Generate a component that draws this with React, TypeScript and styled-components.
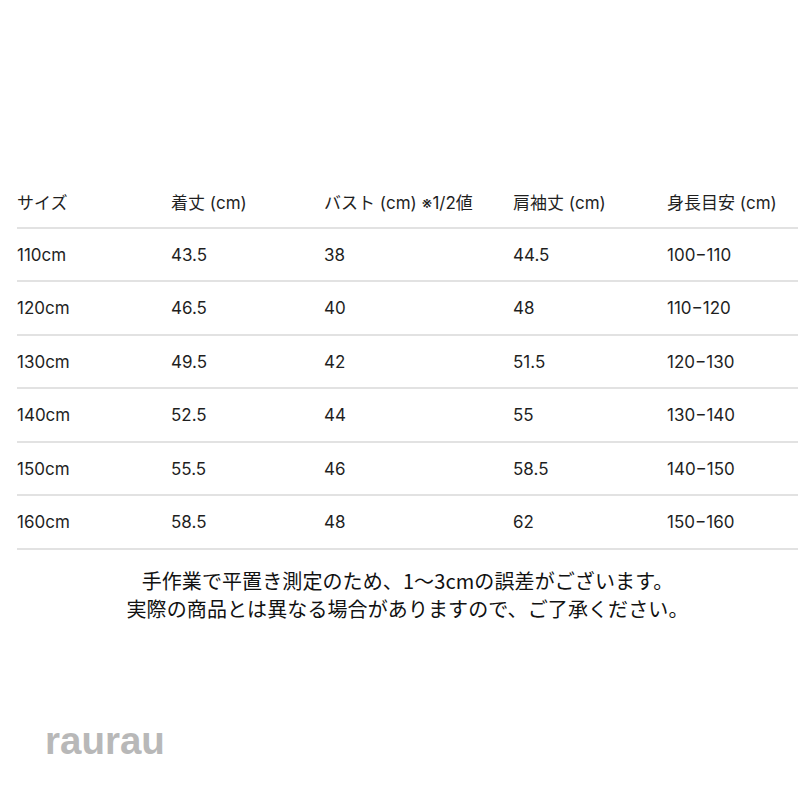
import React from "react";
import styled, { createGlobalStyle } from "styled-components";

const GlobalStyle = createGlobalStyle`
  body {
    margin: 0;
    background: #ffffff;
    font-family: Inter, Roboto, "Noto Sans CJK JP", sans-serif;
    color: #222222;
  }
`;

const Page = styled.div`
  width: 812px;
  height: 812px;
  padding: 175px 14px 0 17px;
  box-sizing: border-box;
  display: flex;
  flex-direction: column;
`;

const Table = styled.div`
  display: grid;
  grid-template-columns: 154px 153px 189px 154px 131px;
`;

const Cell = styled.div`
  height: 53.5px;
  box-sizing: border-box;
  display: flex;
  align-items: center;
  padding-top: 1px;
  border-bottom: 2px solid #e2e2e2;
  font-size: 17px;
  color: #1f1f1f;
  white-space: nowrap;
`;

const Notes = styled.div`
  margin-top: 17px;
  text-align: center;
  font-family: "Noto Sans CJK JP", sans-serif;
  font-size: 20px;
  line-height: 28px;
  letter-spacing: 0.1px;
  color: #111111;
`;

const Mark = styled.div`
  margin-top: 99px;
  margin-left: 28px;
  font-family: "Liberation Sans", Arial, sans-serif;
  font-weight: bold;
  font-size: 38.5px;
  line-height: 38px;
  color: #b8b8b8;
`;

const headers = ["サイズ", "着丈 (cm)", "バスト (cm) ※1/2値", "肩袖丈 (cm)", "身長目安 (cm)"];

const rows = [
  ["110cm", "43.5", "38", "44.5", "100−110"],
  ["120cm", "46.5", "40", "48", "110−120"],
  ["130cm", "49.5", "42", "51.5", "120−130"],
  ["140cm", "52.5", "44", "55", "130−140"],
  ["150cm", "55.5", "46", "58.5", "140−150"],
  ["160cm", "58.5", "48", "62", "150−160"],
];

export default function App() {
  return (
    <Page>
      <GlobalStyle />
      <Table>
        {headers.map((h) => (
          <Cell key={h}>{h}</Cell>
        ))}
        {rows.map((r) =>
          r.map((v, i) => <Cell key={r[0] + i}>{v}</Cell>)
        )}
      </Table>
      <Notes>
        手作業で平置き測定のため、1〜3cmの誤差がございます。
        <br />
        実際の商品とは異なる場合がありますので、ご了承ください。
      </Notes>
      <Mark>raurau</Mark>
    </Page>
  );
}
